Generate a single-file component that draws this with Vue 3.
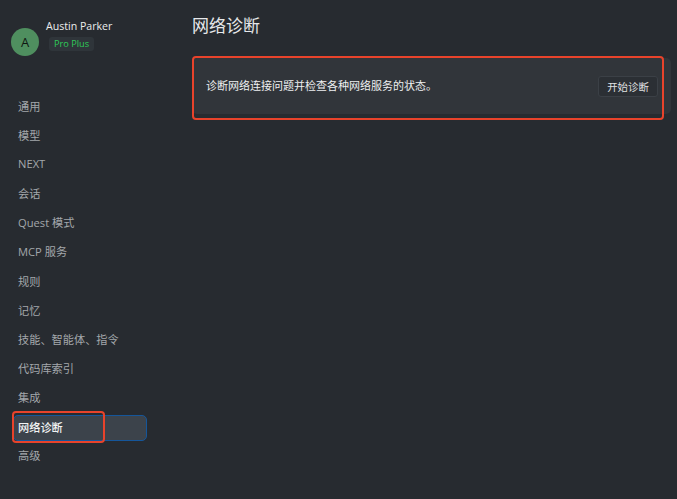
<script setup>
const items = ['通用', '模型', 'NEXT', '会话', 'Quest 模式', 'MCP 服务', '规则', '记忆', '技能、智能体、指令', '代码库索引', '集成', '网络诊断', '高级']
const activeItem = '网络诊断'
</script>

<template>
  <div class="app">
    <aside class="sidebar">
      <div class="profile">
        <div class="avatar">A</div>
        <div class="identity">
          <div class="name">Austin Parker</div>
          <div class="badge">Pro Plus</div>
        </div>
      </div>
      <nav class="nav">
        <div v-for="item in items" :key="item" class="nav-item" :class="{ active: item === activeItem }">
          <span class="nav-label">{{ item }}</span>
          <span v-if="item === activeItem" class="nav-mark"></span>
        </div>
      </nav>
    </aside>
    <main class="content">
      <h1 class="title">网络诊断</h1>
      <section class="card">
        <p class="desc">诊断网络连接问题并检查各种网络服务的状态。</p>
        <button class="btn">开始诊断</button>
        <span class="card-mark"></span>
      </section>
    </main>
  </div>
</template>

<style>
html, body { margin: 0; background: #272b30; }
</style>

<style scoped>
.app {
  width: 677px;
  height: 499px;
  display: flex;
  overflow: hidden;
  background: #272b30;
  color: #d8dadc;
  font-family: "Open Sans", "Noto Sans CJK SC", sans-serif;
}
.sidebar {
  width: 192px;
  flex: none;
  padding: 18px 0 0 13px;
  box-sizing: border-box;
}
.profile {
  display: flex;
  align-items: flex-start;
  gap: 7px;
  height: 73px;
}
.avatar {
  width: 28px;
  height: 28px;
  margin-top: 10px;
  margin-left: -2px;
  border-radius: 50%;
  background: #4f8f5f;
  color: #101712;
  font-size: 13px;
  line-height: 28px;
  text-align: center;
  flex: none;
}
.identity { display: flex; flex-direction: column; align-items: flex-start; }
.name {
  font-size: 10.6px;
  line-height: 16px;
  color: #eceded;
}
.badge {
  margin: 3px 0 0 3px;
  padding: 0 5px;
  height: 14px;
  line-height: 14px;
  font-size: 9.2px;
  color: #2ecb58;
  background: #2f353a;
  border-radius: 3px;
}
.nav {
  display: flex;
  flex-direction: column;
  width: 134px;
}
.nav-item {
  position: relative;
  height: 29.17px;
  display: flex;
  align-items: center;
  padding-left: 5px;
  font-size: 11.2px;
  color: #a3a7ab;
  box-sizing: border-box;
}
.nav-item.active {
  color: #f2f3f3;
  font-weight: 500;
  height: 26px;
  margin: 3.13px 0 0.04px;
  padding-bottom: 1px;
  background: #3c434b;
  border: 1px solid #15569a;
  border-radius: 5px;
  padding-left: 4px;
}
.nav-mark {
  position: absolute;
  left: -2px;
  top: -5px;
  width: 93px;
  height: 32px;
  box-sizing: border-box;
  border: 2px solid #e8432b;
  border-radius: 4px;
}
.content {
  flex: 1;
  padding: 14px 6px 0 0;
  min-width: 0;
}
.title {
  margin: 0;
  font-size: 17px;
  font-weight: 400;
  line-height: 24px;
  color: #e6e8ea;
}
.card {
  position: relative;
  margin-top: 20px;
  height: 56px;
  padding: 0 13px 0 14px;
  display: flex;
  align-items: center;
  justify-content: space-between;
  background: #31353a;
  border-radius: 5px;
}
.desc {
  margin: 0 0 2px;
  font-size: 11px;
  color: #eef0f1;
}
.btn {
  width: 60px;
  height: 21px;
  padding: 0;
  font: inherit;
  font-size: 10.4px;
  color: #e0e2e3;
  background: #2b2f34;
  border: 1px solid #3b4046;
  border-radius: 3px;
}
.card-mark {
  position: absolute;
  left: 0;
  top: -2px;
  right: 7px;
  bottom: -6px;
  border: 2px solid #e8432b;
  border-radius: 4px;
}
</style>
